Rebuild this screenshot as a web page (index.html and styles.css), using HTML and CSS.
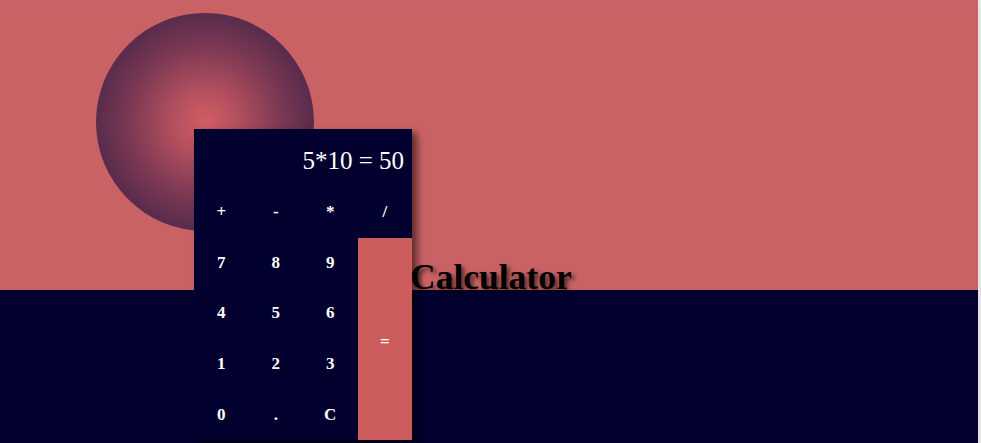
FILE: index.html
```html
<!DOCTYPE html>
<html>
<head>
<meta charset="utf-8">
<link rel="stylesheet" href="styles.css">
</head>
<body>
<div class="page">
  <div class="orb"></div>
  <section class="top">
    <h1 class="title">Calculator</h1>
  </section>
  <section class="bottom"></section>
  <div class="calc">
    <div class="display">5*10 = 50</div>
    <div class="key">+</div>
    <div class="key">-</div>
    <div class="key">*</div>
    <div class="key">/</div>
    <div class="key">7</div>
    <div class="key">8</div>
    <div class="key">9</div>
    <div class="key equals">=</div>
    <div class="key">4</div>
    <div class="key">5</div>
    <div class="key">6</div>
    <div class="key">1</div>
    <div class="key">2</div>
    <div class="key">3</div>
    <div class="key">0</div>
    <div class="key">.</div>
    <div class="key">C</div>
  </div>
</div>
</body>
</html>
```
FILE: styles.css
```css
html, body {
  margin: 0;
  padding: 0;
  height: 100%;
  overflow: hidden;
}
body {
  background: #e4e4e4;
  font-family: "Liberation Serif", "Times New Roman", serif;
}
.page {
  position: relative;
  width: 978px;
  height: 443px;
  display: flex;
  flex-direction: column;
}
.top {
  height: 290px;
  background: #c96264;
  border-top: 1px solid #c95f6c;
  box-sizing: border-box;
  display: flex;
  align-items: flex-end;
}
.bottom {
  flex: 1;
  background: #02002e;
}
.title {
  margin: 0 0 -6px 410px;
  font-size: 35.5px;
  line-height: 37px;
  font-weight: bold;
  color: #000;
  text-shadow: 3px 3px 4px rgba(0, 0, 0, 0.6);
  position: relative;
  z-index: 1;
}
.orb {
  position: absolute;
  left: 96px;
  top: 13px;
  width: 218px;
  height: 218px;
  border-radius: 50%;
  background: radial-gradient(circle, #d25d63 0%, #b5505f 20%, #7a3853 50%, #52284b 75%, #3a1b42 100%);
  z-index: 1;
}
.calc {
  position: absolute;
  left: 194px;
  top: 129px;
  width: 218px;
  display: grid;
  grid-template-columns: repeat(4, 1fr);
  grid-template-rows: 58px repeat(5, 50.6px);
  background: #02002e;
  box-shadow: 5px 4px 7px rgba(0, 0, 0, 0.55);
  z-index: 2;
  color: #fff;
}
.display {
  grid-column: 1 / -1;
  display: flex;
  align-items: center;
  justify-content: flex-end;
  padding: 6px 8px 0 0;
  font-size: 25px;
}
.key {
  display: flex;
  align-items: center;
  justify-content: center;
  font-size: 17px;
  font-weight: bold;
}
.equals {
  grid-column: 4;
  grid-row: 3 / span 4;
  background: #cd5c5c;
  padding-top: 6px;
}
```
